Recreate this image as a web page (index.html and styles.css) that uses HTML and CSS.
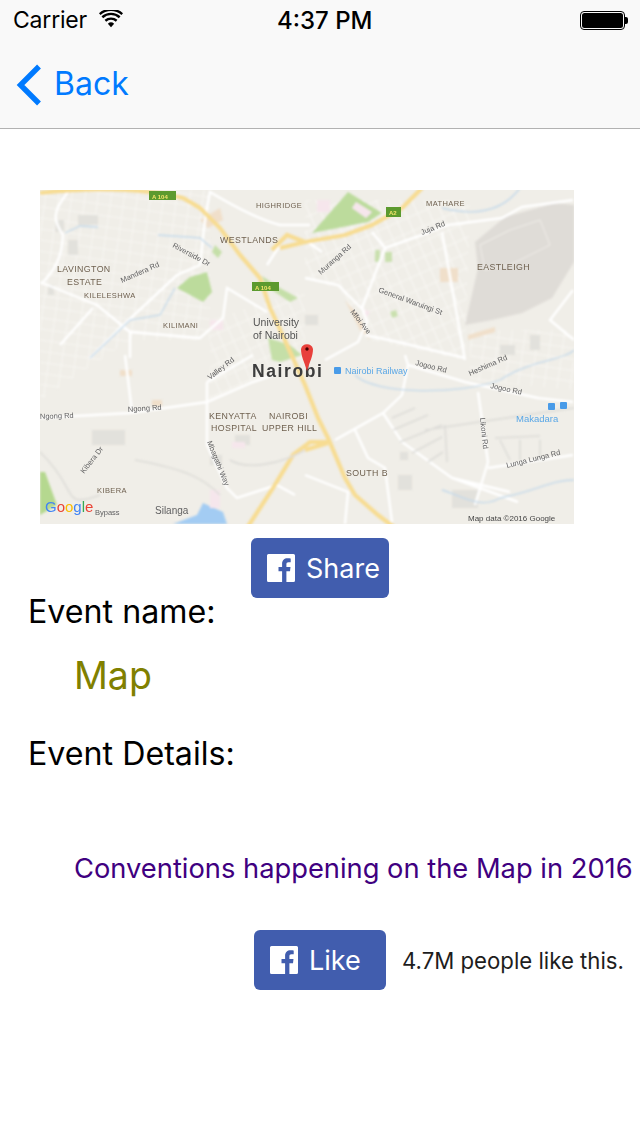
FILE: index.html
```html
<!DOCTYPE html>
<html lang="en">
<head>
<meta charset="utf-8">
<title>Event</title>
<link rel="stylesheet" href="styles.css">
</head>
<body>
<header class="bar">
  <div class="status">
    <div class="status-left">
      <span class="carrier">Carrier</span>
      <svg class="wifi" viewBox="0 0 26 19" width="24" height="18"><path d="M13 18.500 9.600 14.600a5 5 0 0 1 6.800 0z" fill="#000"/><path d="M6.900 11.400a9.200 9.200 0 0 1 12.200 0M3.600 7.600a14 14 0 0 1 18.800 0M.8 4.200a18.400 18.400 0 0 1 24.400 0" fill="none" stroke="#000" stroke-width="2.600"/></svg>
    </div>
    <span class="time">4:37 PM</span>
    <div class="battery"><span class="battery-body"><span class="battery-fill"></span></span><span class="battery-nub"></span></div>
  </div>
  <nav class="nav">
    <svg class="chevron" viewBox="0 0 26 42" width="26" height="42"><path d="M23 2.500 4.500 21 23 39.500" fill="none" stroke="#007aff" stroke-width="5.400"/></svg>
    <span class="back">Back</span>
  </nav>
</header>
<main class="content">
  <svg class="map" viewBox="0 0 534 334" width="534" height="334">
    <defs>
      <filter id="soft" x="-2%" y="-2%" width="104%" height="104%"><feGaussianBlur stdDeviation="0.8"/></filter>
      <filter id="softer" x="-5%" y="-20%" width="110%" height="140%"><feGaussianBlur stdDeviation="0.5"/></filter>
      <pattern id="streets" width="13" height="11" patternUnits="userSpaceOnUse" patternTransform="rotate(8)">
        <path d="M0 5.500H13M6.500 0V11" stroke="#fbfaf7" stroke-width="1" fill="none"/>
      </pattern>
      <pattern id="streets2" width="11" height="14" patternUnits="userSpaceOnUse" patternTransform="rotate(-24)">
        <path d="M0 7H11M5.500 0V14" stroke="#fbfaf7" stroke-width="1" fill="none"/>
      </pattern>
    </defs>
    <rect width="534" height="334" fill="#f0eee8"/>
    <g filter="url(#soft)">
      <path d="M0 0H170V150H90L0 210Z" fill="url(#streets)" opacity=".7"/>
      <path d="M265 10H430L425 170 330 150 300 100 265 85Z" fill="url(#streets2)" opacity=".8"/>
      <path d="M170 130 265 100 265 170 170 210Z" fill="url(#streets2)" opacity=".7"/>
      <path d="M430 140H534V200L430 190Z" fill="url(#streets)" opacity=".7"/>
      <path d="M425 135 438 78 435 52 465 27 515 13 534 15V72L512 108 482 123 452 130Z" fill="#dfdcd7"/>
      <path d="M440 55 470 40 500 30 510 55 470 75 445 80Z" fill="none" stroke="#e9e7e2" stroke-width="1.500"/>
      <path d="M137 98 150 87 167 82 172 102 163 112Z" fill="#bcdb9c"/>
      <path d="M272 43 308 2 342 23 328 32 298 38Z" fill="#bcdb9c"/>
      <path d="M0 282H5L17 315 0 325Z" fill="#b5d88f"/>
      <path d="M222 86 240 98 258 108 250 112 226 96ZM228 148 250 155 262 165 240 172 232 170ZM175 55 182 62 178 68 172 62Z" fill="#c5dfa8"/>
      <path d="M133 334 157 325 163 313 183 322 187 334Z" fill="#a3ccf3"/>
      <path d="M335 60H340V72H335ZM345 62H352V72H345ZM350 122 356 120 358 126 352 128Z" fill="#c9e0ae"/>
      <path d="M52 240H85V255H52ZM8 95H14V105H8ZM15 30H24V42H15ZM28 50H38V65H28ZM38 25H58V35H38ZM195 245H210V255H195ZM170 265H182V275H170ZM412 300H438V318H412ZM360 262H368V270H360ZM358 285H372V300H358ZM460 155H475V165H460ZM490 145H500V160H490ZM265 125H278V135H265Z" fill="#e2e1dc"/>
      <path d="M400 78H418V92H400ZM428 145 455 137V142L428 150ZM160 30 180 18 183 30 168 38ZM112 210H122V216H112ZM305 110 320 140 330 150 318 125ZM80 180H92V186H80Z" fill="#f0dfca"/>
      <path d="M170 130H183V140H170ZM277 10H290V22H277ZM170 300H180V318H170ZM316 12 332 22 326 28 312 18ZM322 118 330 122 326 128ZM192 252H205V258H192Z" fill="#f6e6ec"/>

      <g fill="none" stroke="#fff" stroke-width="2.400">
        <path d="M28 2C12 22 13 30 23 45 22 60 20 75 3 92M0 92 57 115 90 142 160 148 183 128 187 98 227 122M50 168 80 138 137 85 160 75C163 55 162 40 170 2 200 20 220 30 240 35H270M20 155 53 118M90 142V168M227 75 240 55"/>
        <path d="M0 228 90 223 167 212 213 192 233 185M85 165 92 222M167 192V255L187 298 197 308 237 295M167 192 213 165"/>
        <path d="M332 42 345 58 382 45 408 35 462 28 482 17 533 10M345 58 322 118 327 132 318 152 285 170M265 88 298 95 325 122M402 42 425 170M265 50 282 62M325 145 358 152 425 168"/>
        <path d="M365 165 368 175 425 192 498 208 533 212M368 175 362 205 343 223 295 250M343 223 362 252 412 288 478 312M438 202 448 272 435 315M448 278 533 265M412 288 470 302M315 240 328 268 345 278 352 332M265 285 308 302 305 334M237 295 255 305M533 100 510 130 534 150"/>
      </g>
      <g fill="none" stroke="#f7dc92" stroke-width="4.200">
        <path d="M0 3C40 -2 100 -3 143 8L160 18 180 38 200 65 220 88 230 118 247 155 265 195 278 228 288 248 305 288 315 305 338 325 355 338"/>
        <path d="M207 338 233 298 253 265 270 252 288 252M265 260 288 253"/>
        <path d="M265 52 305 45 332 35 362 18 382 -2M240 58 265 52 247 45 232 60"/>
      </g>
      <g fill="none" stroke="#c3d9ea" stroke-width="1.300">
        <path d="M25 43 40 36 58 37M118 45 160 48 172 58M50 168 90 130 120 125 135 98M402 18C430 25 460 25 480 -2M315 185C335 205 420 205 460 190 490 170 525 170 534 160"/>
        <path d="M402 300C420 305 440 320 460 308 500 300 510 290 534 290"/>
      </g>
      <g fill="none" stroke="#dddcd8" stroke-width="1.600">
        <path d="M352 228 375 218M353 240 388 225M360 252 402 235M372 263 402 247M388 272 403 262M385 240 534 218M405 235 407 272M455 248 500 246M460 250 470 270M480 250V270M500 250V270M0 262C40 300 20 320 60 305M95 270C150 280 165 290 180 305M265 260C240 275 205 280 190 270"/>
      </g>
    </g>
    <g filter="url(#softer)">
      <text class="place big" x="17" y="82">LAVINGTON</text>
      <text class="place big" x="27" y="95">ESTATE</text>
      <text class="place" x="44" y="108">KILELESHWA</text>
      <text class="place" x="123" y="138">KILIMANI</text>
      <text class="place big" x="180" y="53">WESTLANDS</text>
      <text class="place" x="216" y="18">HIGHRIDGE</text>
      <text class="place" x="386" y="16">MATHARE</text>
      <text class="place big" x="437" y="80">EASTLEIGH</text>
      <text class="uni" x="213" y="136">University</text>
      <text class="uni" x="213" y="149">of Nairobi</text>
      <text class="nairobi" x="212" y="187">Nairobi</text>
      <text class="place big" x="169" y="229">KENYATTA</text>
      <text class="place big" x="229" y="229">NAIROBI</text>
      <text class="place big" x="171" y="241">HOSPITAL</text>
      <text class="place big" x="222" y="241">UPPER HILL</text>
      <text class="place big" x="306" y="286">SOUTH B</text>
      <text class="place" x="57" y="303">KIBERA</text>
      <text class="road big" x="115" y="324">Silanga</text>
      <text class="road" x="88" y="222" transform="rotate(-4 88 222)">Ngong Rd</text>
      <text class="road" x="0" y="229" transform="rotate(-2 0 229)">Ngong Rd</text>
      <text class="road" x="82" y="93" transform="rotate(-24 82 93)">Mandera Rd</text>
      <text class="road" x="132" y="57" transform="rotate(28 132 57)">Riverside Dr</text>
      <text class="road" x="281" y="85" transform="rotate(-42 281 85)">Muranga Rd</text>
      <text class="road" x="382" y="45" transform="rotate(-22 382 45)">Juja Rd</text>
      <text class="road" x="338" y="102" transform="rotate(20 338 102)">General Waruingi St</text>
      <text class="road" x="310" y="122" transform="rotate(52 310 122)">Mfoi Ave</text>
      <text class="road" x="170" y="190" transform="rotate(-38 170 190)">Valley Rd</text>
      <text class="road" x="167" y="252" transform="rotate(68 167 252)">Mbagathi Way</text>
      <text class="road" x="44" y="284" transform="rotate(-52 44 284)">Kibera Dr</text>
      <text class="road" x="375" y="175" transform="rotate(14 375 175)">Jogoo Rd</text>
      <text class="road" x="450" y="198" transform="rotate(12 450 198)">Jogoo Rd</text>
      <text class="road" x="430" y="186" transform="rotate(-24 430 186)">Heshima Rd</text>
      <text class="road" x="440" y="228" transform="rotate(84 440 228)">Likoni Rd</text>
      <text class="road" x="467" y="278" transform="rotate(-14 467 278)">Lunga Lunga Rd</text>
      <text class="rail" x="305" y="184">Nairobi Railway</text>
      <text class="rail big" x="476" y="232">Makadara</text>
      <text class="copy" x="428" y="331">Map data ©2016 Google</text>
      <rect x="294" y="177" width="7" height="7" rx="1" fill="#4a9be8"/>
      <rect x="508" y="213" width="7" height="7" rx="1" fill="#4a9be8"/>
      <rect x="520" y="212" width="7" height="7" rx="1" fill="#4a9be8"/>
      <rect x="109" y="1" width="27" height="9" fill="#5c9a2e"/><text class="shield" x="112" y="8.500">A 104</text>
      <rect x="212" y="92" width="27" height="9" fill="#5c9a2e"/><text class="shield" x="215" y="99.500">A 104</text>
      <rect x="346" y="17" width="15" height="10" fill="#5c9a2e"/><text class="shield" x="349" y="25">A2</text>
      <text class="google" x="5" y="322"><tspan fill="#4285f4">G</tspan><tspan fill="#ea4335">o</tspan><tspan fill="#fbbc05">o</tspan><tspan fill="#4285f4">g</tspan><tspan fill="#34a853">l</tspan><tspan fill="#ea4335">e</tspan></text>
      <text class="road" x="55" y="325">Bypass</text>
      <path d="M267 181C264 171 261 166 261 159A6.200 6.200 0 0 1 273 159C273 166 270 171 267 181Z" fill="#e8413a"/>
      <circle cx="267" cy="159" r="1.700" fill="#400"/>
    </g>
  </svg>
  <div class="share-row">
    <a class="fb-btn share">
      <svg class="fb-icon" viewBox="0 0 28 28" width="28" height="28"><path d="M1.500 0h25A1.500 1.500 0 0 1 28 1.500v25a1.500 1.500 0 0 1-1.500 1.500H19.400V17.200h3.600l.5-4.200h-4.100v-2.700c0-1.200.4-2 2.100-2h2.200V4.500c-.4 0-1.700-.2-3.200-.2-3.200 0-5.400 2-5.400 5.500V13h-3.600v4.200h3.600V28H1.500A1.500 1.500 0 0 1 0 26.500v-25A1.500 1.500 0 0 1 1.500 0z" fill="#fff"/></svg>
      <span>Share</span>
    </a>
  </div>
  <div class="label name-label">Event name:</div>
  <div class="value-name">Map</div>
  <div class="label details-label">Event Details:</div>
  <div class="value-details">Conventions happening on the Map in 2016</div>
  <div class="like-row">
    <a class="fb-btn like">
      <svg class="fb-icon" viewBox="0 0 28 28" width="28" height="28"><path d="M1.500 0h25A1.500 1.500 0 0 1 28 1.500v25a1.500 1.500 0 0 1-1.500 1.500H19.400V17.200h3.600l.5-4.200h-4.100v-2.700c0-1.200.4-2 2.100-2h2.200V4.500c-.4 0-1.700-.2-3.200-.2-3.200 0-5.400 2-5.400 5.500V13h-3.600v4.200h3.600V28H1.500A1.500 1.500 0 0 1 0 26.500v-25A1.500 1.500 0 0 1 1.500 0z" fill="#fff"/></svg>
      <span>Like</span>
    </a>
    <span class="like-count">4.7M people like this.</span>
  </div>
</main>
</body>
</html>
```
FILE: styles.css
```css
* { box-sizing: border-box; }
html, body { margin: 0; padding: 0; background: #fff; }
body { width: 640px; height: 1136px; overflow: hidden; font-family: Inter, Roboto, "Liberation Sans", sans-serif; color: #000; }

.bar { height: 129px; background: #f9f9f9; border-bottom: 1px solid #b2b2b2; }
.status { position: relative; height: 40px; display: flex; align-items: center; justify-content: space-between; padding: 0 12px 0 13px; }
.status-left { display: flex; align-items: center; gap: 12px; }
.carrier { font-size: 23px; letter-spacing: -0.2px; }
.wifi { margin-top: -2px; }
.time { position: absolute; left: 277px; top: 7px; font-size: 24px; font-weight: 500; line-height: 28px; }
.battery { display: flex; align-items: center; }
.battery-body { display: block; width: 45px; height: 19px; border: 1px solid #000; border-radius: 4px; padding: 1px; }
.battery-fill { display: block; height: 100%; background: #000; border-radius: 2.5px; }
.battery-nub { display: block; width: 3px; height: 7px; background: #000; border-radius: 0 2px 2px 0; }
.nav { height: 88px; display: flex; align-items: center; padding: 0 0 0 16px; gap: 12px; }
.chevron { margin-top: 1px; }
.back { font-size: 32px; color: #007aff; line-height: 40px; }

.content { display: flex; flex-direction: column; align-items: flex-start; }
.map { display: block; margin: 61px 0 0 40px; }
.map text { font-family: "Liberation Sans", sans-serif; }
.place { font-size: 7.5px; fill: #6f6150; letter-spacing: .4px; }
.place.big { font-size: 8.8px; }
.road { font-size: 7.5px; fill: #5f5f60; }
.road.big { font-size: 10px; }
.uni { font-size: 10.5px; fill: #555; }
.nairobi { font-size: 17.5px; font-weight: 700; fill: #3c3c3c; letter-spacing: 1.6px; }
.rail { font-size: 9px; fill: #5aa7e6; }
.rail.big { font-size: 9.5px; }
.copy { font-size: 8px; fill: #444; }
.shield { font-size: 6px; font-weight: 700; fill: #f3e36a; }
.google { font-size: 15px; font-weight: 400; }

.share-row { width: 640px; display: flex; justify-content: center; margin-top: 14px; }
.fb-btn { height: 60px; background: #415dae; border-radius: 6px; display: flex; align-items: center; color: #fff; font-size: 27px; }
.share { width: 138px; padding-left: 16px; gap: 11px; }
.like { width: 132px; padding-left: 16px; gap: 11px; }

.label { font-size: 32.2px; margin-left: 28px; }
.name-label { line-height: 28px; }
.value-name { font-size: 37.5px; line-height: 46px; margin: 27px 0 0 74px; color: #808000; }
.details-label { line-height: 38px; margin-top: 36px; }
.value-details { font-size: 27.3px; line-height: 34px; margin: 79px 0 0 74px; color: #400080; white-space: nowrap; }
.like-row { display: flex; align-items: center; gap: 17px; margin: 44px 0 0 254px; white-space: nowrap; }
.like-count { font-size: 22.2px; color: #1d1d1d; margin-left: -1px; }
```
